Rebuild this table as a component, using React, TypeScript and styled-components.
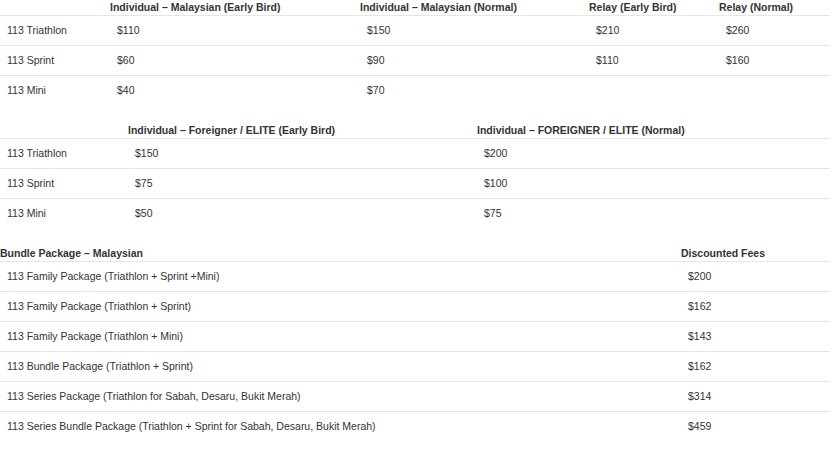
import React from "react";
import styled, { createGlobalStyle } from "styled-components";

const Global = createGlobalStyle`
  html, body { margin: 0; padding: 0; background: #fff; }
  body { font-family: "Liberation Sans", Arial, sans-serif; font-size: 10.5px; color: #333; }
`;

const Page = styled.div`
  width: 830px;
  display: flex;
  flex-direction: column;
  gap: 18px;
`;

const Table = styled.div<{ $cols: string }>`
  display: grid;
  grid-template-columns: ${(p) => p.$cols};
`;

const Head = styled.div`
  font-weight: bold;
  line-height: 15px;
  height: 15px;
  white-space: nowrap;
`;

const Cell = styled.div`
  height: 30px;
  line-height: 29px;
  padding-left: 7px;
  border-top: 1px solid #e6e6e6;
  box-sizing: border-box;
  white-space: nowrap;
`;

type T = { cols: string; head: string[]; rows: string[][] };

const tables: T[] = [
  {
    cols: "110px 250px 229px 130px 111px",
    head: [
      "",
      "Individual – Malaysian (Early Bird)",
      "Individual – Malaysian (Normal)",
      "Relay (Early Bird)",
      "Relay (Normal)",
    ],
    rows: [
      ["113 Triathlon", "$110", "$150", "$210", "$260"],
      ["113 Sprint", "$60", "$90", "$110", "$160"],
      ["113 Mini", "$40", "$70", "", ""],
    ],
  },
  {
    cols: "128px 349px 353px",
    head: ["", "Individual – Foreigner / ELITE (Early Bird)", "Individual – FOREIGNER / ELITE (Normal)"],
    rows: [
      ["113 Triathlon", "$150", "$200"],
      ["113 Sprint", "$75", "$100"],
      ["113 Mini", "$50", "$75"],
    ],
  },
  {
    cols: "681px 149px",
    head: ["Bundle Package – Malaysian", "Discounted Fees"],
    rows: [
      ["113 Family Package (Triathlon + Sprint +Mini)", "$200"],
      ["113 Family Package (Triathlon + Sprint)", "$162"],
      ["113 Family Package (Triathlon + Mini)", "$143"],
      ["113 Bundle Package (Triathlon + Sprint)", "$162"],
      ["113 Series Package (Triathlon for Sabah, Desaru, Bukit Merah)", "$314"],
      ["113 Series Bundle Package (Triathlon + Sprint for Sabah, Desaru, Bukit Merah)", "$459"],
    ],
  },
];

export default function App() {
  return (
    <>
      <Global />
      <Page>
        {tables.map((t, ti) => (
          <Table key={ti} $cols={t.cols}>
            {t.head.map((h, i) => (
              <Head key={"h" + i}>{h}</Head>
            ))}
            {t.rows.map((r, ri) =>
              r.map((c, ci) => <Cell key={ri + "-" + ci}>{c}</Cell>)
            )}
          </Table>
        ))}
      </Page>
    </>
  );
}
